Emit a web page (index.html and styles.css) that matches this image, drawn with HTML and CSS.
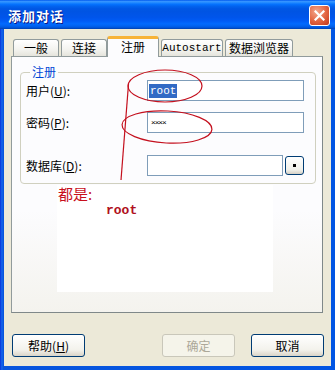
FILE: index.html
```html
<!DOCTYPE html>
<html lang="zh-CN">
<head>
    <meta charset="UTF-8">
    <title>添加对话</title>
    <link rel="stylesheet" href="styles.css">
</head>
<body>
    <div class="window">
        <div class="titlebar">
            <span class="title">添加对话</span>
            <span class="close">
                <svg width="11" height="11" viewBox="0 0 11 11">
                    <path d="M1.5 1.5 L9.5 9.5 M9.5 1.5 L1.5 9.5" stroke="#fff" stroke-width="2.2" stroke-linecap="square"/>
                </svg>
            </span>
        </div>

        <div class="client">
            <div class="tabs">
                <div class="tab">一般</div>
                <div class="tab">连接</div>
                <div class="tab active">注册</div>
                <div class="tab tab-auto">Autostart</div>
                <div class="tab tab-db">数据浏览器</div>
            </div>

            <div class="panel">
                <fieldset class="group">
                    <legend>注册</legend>
                    <div class="field">
                        <label>用户(<u>U</u>):</label>
                        <div class="input"><span class="selected">root</span></div>
                    </div>
                    <div class="field field-pass">
                        <label>密码(<u>P</u>):</label>
                        <div class="input"><span class="stars">××××</span></div>
                    </div>
                    <div class="field field-db">
                        <label>数据库(<u>D</u>):</label>
                        <div class="input"></div>
                        <button class="browse"><span class="dot"></span></button>
                    </div>
                </fieldset>
            </div>

            <div class="buttons">
                <button class="btn">帮助(<u>H</u>)</button>
                <button class="btn btn-ok" disabled>确定</button>
                <button class="btn">取消</button>
            </div>
        </div>

        <!-- pasted note over the dialog -->
        <div class="note">
            <div class="note-title">都是:</div>
            <div class="note-value">root</div>
        </div>

        <svg class="marks" width="335" height="370" viewBox="0 0 335 370">
            <ellipse cx="165" cy="86" rx="37" ry="16" fill="none" stroke="#c4101e" stroke-width="1.2"/>
            <ellipse cx="167" cy="127" rx="45" ry="16" fill="none" stroke="#c4101e" stroke-width="1.2" transform="rotate(3 167 127)"/>
            <path d="M128.5 84 L121 180" stroke="#c4101e" stroke-width="1.2" fill="none"/>
        </svg>
    </div>
</body>
</html>
```

FILE: styles.css
```css
/* General Styles */
* {
    margin: 0;
    padding: 0;
    box-sizing: border-box;
}

body {
    font-family: "Liberation Sans", "Noto Sans CJK SC", sans-serif;
    font-size: 12px;
    background-color: #ffffff;
}

/* Window frame */
.window {
    position: relative;
    width: 335px;
    height: 370px;
    display: flex;
    flex-direction: column;
    background: linear-gradient(to right, #0831d9, #166aee 2px, #0855dd 3px, #0054e3);
}

.titlebar {
    height: 29px;
    display: flex;
    align-items: center;
    justify-content: space-between;
    padding: 0 5px 0 8px;
    background: linear-gradient(to bottom, #0058ee 0%, #3593ff 5%, #288eff 8%, #127dff 12%, #036ffc 16%, #0262ee 22%, #0057e5 30%, #0054e3 40%, #0055eb 60%, #005bf5 72%, #026afe 82%, #0062ef 90%, #0052d6 96%, #0040ab 100%);
}

.title {
    color: #fff;
    font-family: "Noto Sans CJK SC", sans-serif;
    font-size: 13px;
    font-weight: bold;
    letter-spacing: 1px;
    text-shadow: 1px 1px 0 #0a1883;
    padding-top: 1px;
}

.close {
    width: 21px;
    height: 21px;
    display: flex;
    align-items: center;
    justify-content: center;
    border: 1px solid #fff;
    border-radius: 3px;
    background: radial-gradient(circle at 35% 30%, #f3a78d, #e2633f 55%, #c1371c);
    margin-top: 1px;
}

.client {
    flex: 1;
    margin: 0 4px 4px;
    background-color: #ece9d8;
    padding-top: 7px;
}

/* Tabs */
.tabs {
    display: flex;
    align-items: flex-end;
    gap: 2px;
    height: 21px;
    padding-left: 9px;
    margin-bottom: -1px;
    position: relative;
    z-index: 1;
    font-family: "Noto Sans CJK SC", sans-serif;
}

.tab {
    width: 46px;
    height: 17px;
    margin-bottom: 1px;
    border: 1px solid #919b9c;
    border-bottom: none;
    border-radius: 3px 3px 0 0;
    background: linear-gradient(#ffffff, #f3f3ef 60%, #e5e4dc);
    text-align: center;
    line-height: 16px;
    font-size: 12px;
    color: #000;
}

.tab.active {
    width: 52px;
    height: 21px;
    margin-bottom: 0;
    margin-left: -2px;
    border-top: 3px solid #f7b338;
    background: #fcfcfe;
    line-height: 16px;
    padding-top: 0;
}

.tab-auto {
    width: 62px;
    font-family: "Liberation Mono", monospace;
    font-size: 11px;
}

.tab-db {
    width: 68px;
}

/* Panel */
.panel {
    margin-left: 7px;
    width: 312px;
    height: 257px;
    border: 1px solid #919b9c;
    border-right-color: #7f8889;
    border-bottom-color: #7f8889;
    background: linear-gradient(#fcfcfe 60%, #f4f3ee);
    padding: 7px 6px 0 8px;
}

.group {
    border: 1px solid #d0d0bf;
    border-radius: 4px;
    padding: 0 11px 7px 5px;
    font-family: "Noto Sans CJK SC", sans-serif;
}

.group legend {
    margin-left: 4px;
    padding: 0 2px;
    color: #0046d5;
    line-height: 16px;
}

.field {
    display: flex;
    align-items: center;
    height: 21px;
}

.field-pass {
    margin-top: 11px;
}

.field-db {
    margin-top: 22px;
}

.field label {
    width: 121px;
    flex-shrink: 0;
}

.field label u,
.btn u {
    text-decoration: underline;
}

.input {
    flex: 1;
    height: 21px;
    border: 1px solid #7f9db9;
    background-color: #fff;
    display: flex;
    align-items: center;
    padding-left: 1px;
}

.selected {
    background-color: #316ac5;
    color: #fff;
    font-family: "Liberation Mono", monospace;
    font-size: 11px;
    line-height: 14px;
    padding: 0 1px;
}

.stars {
    font-family: "Liberation Sans", sans-serif;
    font-size: 8px;
    letter-spacing: -1px;
    padding-left: 2px;
}

.browse {
    width: 19px;
    height: 19px;
    margin-left: 2px;
    border: 1px solid #003c74;
    border-radius: 3px;
    background: linear-gradient(#ffffff, #f0f0ea 75%, #d6d0c5);
    display: flex;
    align-items: center;
    justify-content: center;
}

.dot {
    width: 3px;
    height: 3px;
    background-color: #000;
}

/* Bottom buttons */
.buttons {
    display: flex;
    padding: 0 7px 0 8px;
    margin-top: 21px;
    gap: 16px;
}

.btn {
    width: 73px;
    height: 23px;
    border: 1px solid #003c74;
    border-radius: 3px;
    background: linear-gradient(#ffffff, #f3f2ec 70%, #d9d4c8);
    font-family: "Noto Sans CJK SC", sans-serif;
    font-size: 12px;
    color: #000;
}

.btn-ok {
    margin-left: auto;
}

.btn:disabled {
    border-color: #c9c7ba;
    background: #f5f4ea;
    color: #aca899;
}

/* Annotation overlay */
.note {
    position: absolute;
    left: 57px;
    top: 185px;
    width: 216px;
    height: 107px;
    background-color: #fff;
    color: #c8101c;
}

.note-title {
    font-family: "Noto Sans CJK SC", sans-serif;
    font-size: 15px;
    line-height: 17px;
    padding-left: 1px;
}

.note-value {
    font-family: "Liberation Mono", monospace;
    font-weight: bold;
    font-size: 13px;
    color: #b01020;
    padding-left: 49px;
    margin-top: 1px;
}

.marks {
    position: absolute;
    left: 0;
    top: 0;
    pointer-events: none;
}
```
